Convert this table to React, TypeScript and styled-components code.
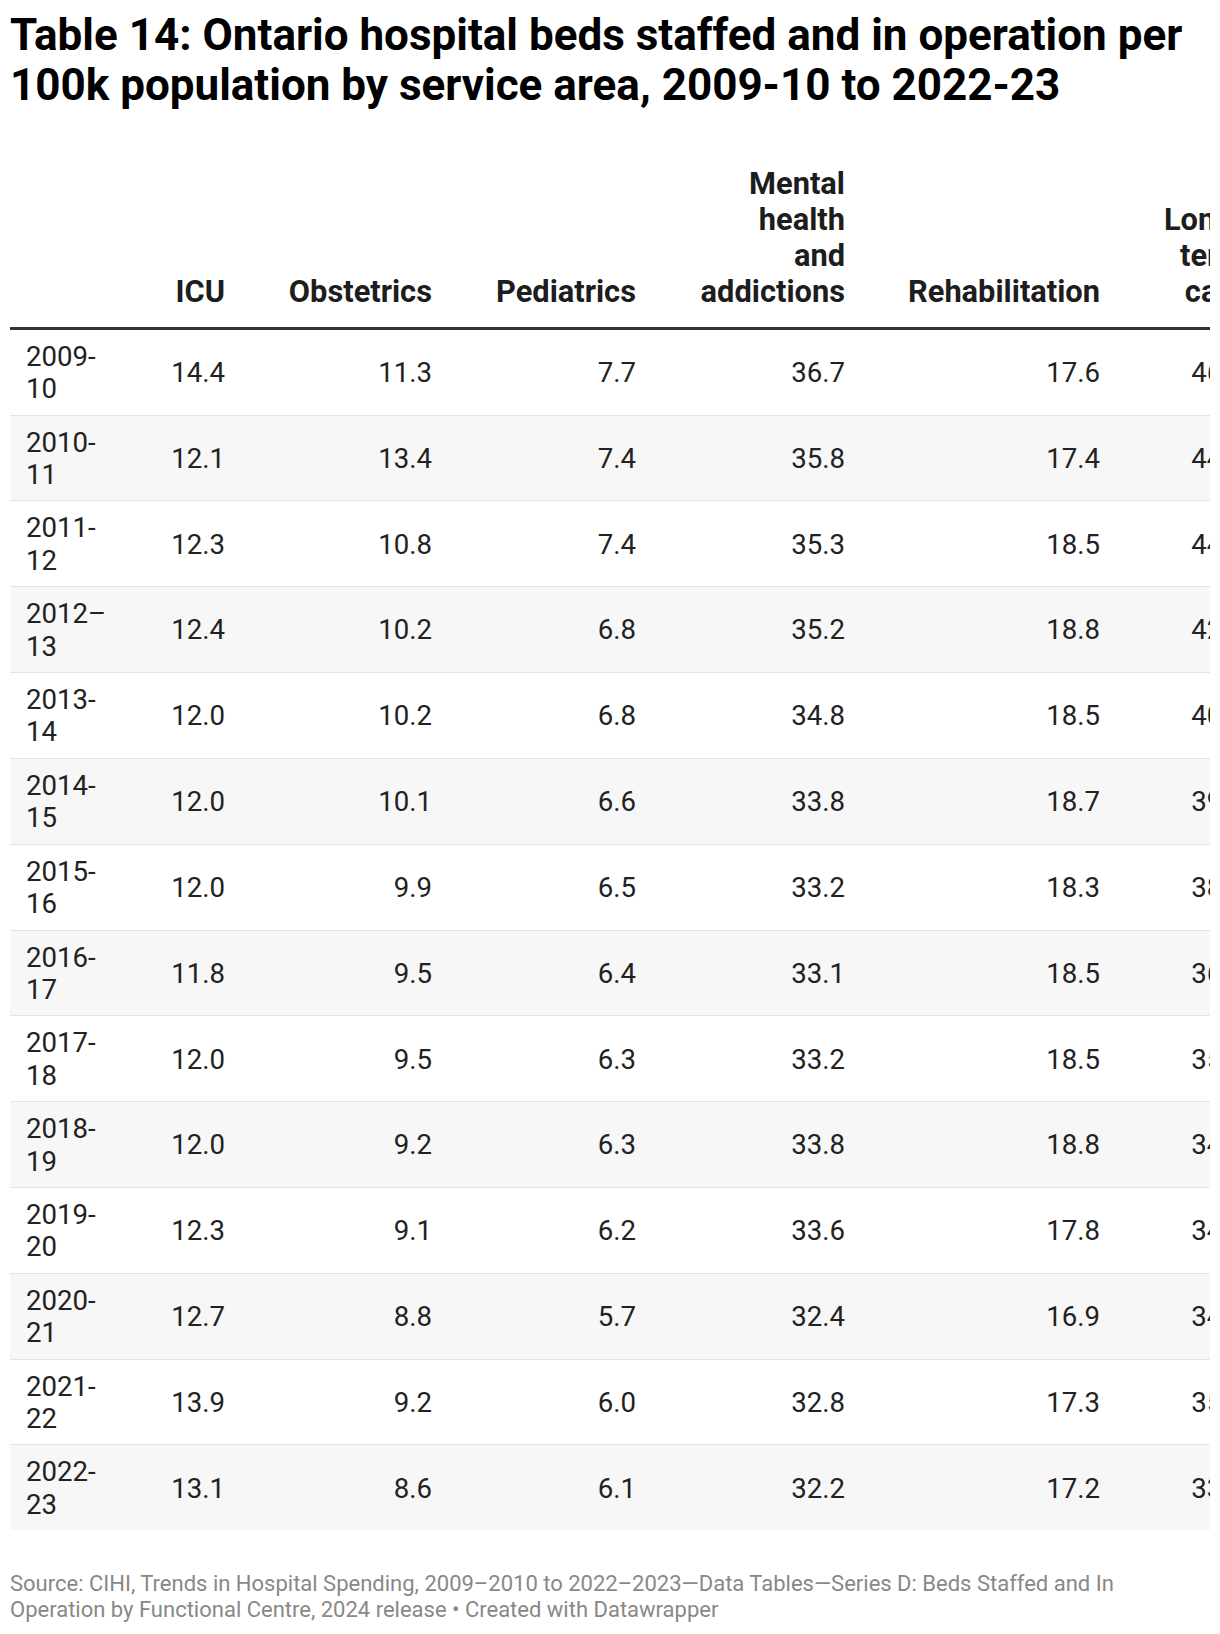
import styled, { createGlobalStyle } from 'styled-components';

const GlobalStyle = createGlobalStyle`
    body {
        margin: 0;
        background: #ffffff;
        font-family: Roboto, "Liberation Sans", Arial, sans-serif;
    }
`

const Page = styled.div`
    padding: 10px;
    width: 1200px;
`

const Title = styled.h1`
    margin: 0 0 45px 0;
    font-size: 44px;
    line-height: 50.4px;
    font-weight: 700;
    color: #000000;
`

const TableScroll = styled.div`
    width: 1200px;
    overflow: hidden;
`

const DataTable = styled.table`
    width: 1251px;
    table-layout: fixed;
    border-collapse: collapse;
`

const HeadCell = styled.th<{ align: 'left' | 'right' }>`
    padding: 10px 16px 17px;
    text-align: ${props => props.align};
    vertical-align: bottom;
    font-size: 30.8px;
    line-height: 36px;
    font-weight: 700;
    color: #1d1d1d;
    white-space: pre-line;
    border-bottom: 3px solid #333333;
`

const Row = styled.tr<{ shaded: boolean }>`
    background: ${props => props.shaded ? '#f7f7f7' : '#ffffff'};
    border-bottom: 1px solid #e4e4e4;

    &:last-child {
        border-bottom: none;
    }
`

const Cell = styled.td<{ align: 'left' | 'right' }>`
    padding: 11px 16px 9px;
    text-align: ${props => props.align};
    vertical-align: middle;
    font-size: 27.6px;
    line-height: 32.4px;
    color: #222222;
`

const Notes = styled.div`
    margin-top: 41px;
    max-width: 1150px;
    font-size: 22px;
    line-height: 26px;
    color: #888888;
`

const COLUMNS = [
    { label: '', width: 130 },
    { label: 'ICU', width: 101 },
    { label: 'Obstetrics', width: 207 },
    { label: 'Pediatrics', width: 204 },
    { label: 'Mental\nhealth\nand\naddictions', width: 209 },
    { label: 'Rehabilitation', width: 255 },
    { label: 'Long-\nterm\ncare', width: 145 },
];

const ROWS: Array<[string, string[]]> = [
    ['2009-10', ['14.4', '11.3', '7.7', '36.7', '17.6', '46.1']],
    ['2010-11', ['12.1', '13.4', '7.4', '35.8', '17.4', '44.9']],
    ['2011-12', ['12.3', '10.8', '7.4', '35.3', '18.5', '44.0']],
    ['2012–13', ['12.4', '10.2', '6.8', '35.2', '18.8', '42.3']],
    ['2013-14', ['12.0', '10.2', '6.8', '34.8', '18.5', '40.6']],
    ['2014-15', ['12.0', '10.1', '6.6', '33.8', '18.7', '39.4']],
    ['2015-16', ['12.0', '9.9', '6.5', '33.2', '18.3', '38.2']],
    ['2016-17', ['11.8', '9.5', '6.4', '33.1', '18.5', '36.5']],
    ['2017-18', ['12.0', '9.5', '6.3', '33.2', '18.5', '35.1']],
    ['2018-19', ['12.0', '9.2', '6.3', '33.8', '18.8', '34.8']],
    ['2019-20', ['12.3', '9.1', '6.2', '33.6', '17.8', '34.4']],
    ['2020-21', ['12.7', '8.8', '5.7', '32.4', '16.9', '34.2']],
    ['2021-22', ['13.9', '9.2', '6.0', '32.8', '17.3', '35.0']],
    ['2022-23', ['13.1', '8.6', '6.1', '32.2', '17.2', '33.5']],
];

const App = () => {
    return (
        <Page>
            <GlobalStyle />
            <Title>
                Table 14: Ontario hospital beds staffed and in operation per 100k population by service area, 2009-10 to 2022-23
            </Title>
            <TableScroll>
                <DataTable>
                    <colgroup>
                        {COLUMNS.map((col, i) => <col key={i} style={{ width: col.width }} />)}
                    </colgroup>
                    <thead>
                        <tr>
                            {COLUMNS.map((col, i) =>
                                <HeadCell key={i} align={i === 0 ? 'left' : 'right'}>{col.label}</HeadCell>
                            )}
                        </tr>
                    </thead>
                    <tbody>
                        {ROWS.map(([year, values], r) =>
                            <Row key={year} shaded={r % 2 === 1}>
                                {/* year labels break after the dash, like the original */}
                                <Cell align="left">{year.slice(0, 5)}<br />{year.slice(5)}</Cell>
                                {values.map((v, i) => <Cell key={i} align="right">{v}</Cell>)}
                            </Row>
                        )}
                    </tbody>
                </DataTable>
            </TableScroll>
            <Notes>
                Source: CIHI, Trends in Hospital Spending, 2009–2010 to 2022–2023—Data Tables—Series D: Beds Staffed and In Operation by Functional Centre, 2024 release • Created with Datawrapper
            </Notes>
        </Page>
    );
}

export default App;
